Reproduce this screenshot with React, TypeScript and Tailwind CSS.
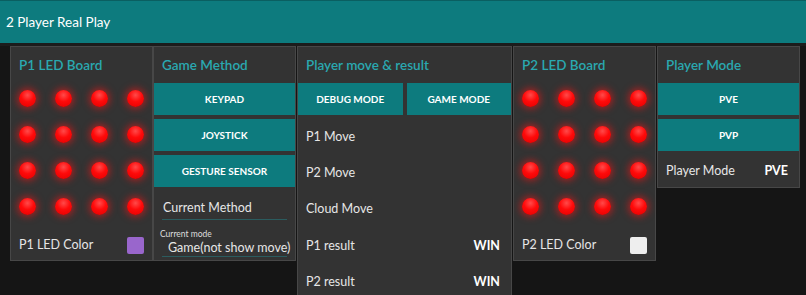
import React from 'react';

const teal = 'bg-[#0d7b7e]';

function Led() {
    return (
        <div className="flex items-center justify-center h-[36px] w-[36px]">
            <div className="w-[17px] h-[17px] rounded-full bg-[radial-gradient(circle_at_50%_30%,#ff4a4a_0%,#ff0a0a_45%,#e00000_100%)] shadow-[0_0_7px_2px_rgba(255,20,20,0.55)]"></div>
        </div>
    );
}

function LedBoard({ title, colorLabel, swatch }: { title: string; colorLabel: string; swatch: string }) {
    return (
        <div className="w-[143px] h-[215px] shrink-0 bg-[#333333] border border-[#474747] flex flex-col">
            <div className="h-[36px] shrink-0 flex items-center pl-[8px] text-[13.5px] font-semibold text-[#2aa8b0]">{title}</div>
            <div className="grid grid-cols-[repeat(4,36px)] -mt-[3px] ml-[-2px] shrink-0">
                {Array.from({ length: 16 }).map((_, i) => (
                    <Led key={i} />
                ))}
            </div>
            <div className="flex items-center justify-between h-[34px] mt-[4px] pl-[8px] pr-[8px] shrink-0">
                <span className="text-[12.5px] text-[#e6e6e6]">{colorLabel}</span>
                <span className={`w-[17px] h-[17px] rounded-[2px] ${swatch}`}></span>
            </div>
        </div>
    );
}

function Btn({ label, className = '' }: { label: string; className?: string }) {
    return (
        <div className={`${teal} h-[32px] shrink-0 flex items-center justify-center text-[10px] font-bold text-white ${className}`}>
            {label}
        </div>
    );
}

export default function App() {
    return (
        <div className="w-[806px] h-[295px] overflow-hidden bg-[#151515] font-['Lato','Liberation_Sans',sans-serif]">
            {/* Title bar */}
            <div className={`h-[43px] ${teal} border-t border-[#0a5f61] flex items-center pl-[6px] text-[13.5px] text-white`}>
                2 Player Real Play
            </div>
            <div className="h-[3px] bg-[#1c1c1c]"></div>

            <div className="flex items-start gap-[1px] pl-[10px]">
                <div className="w-[142px] shrink-0">
                    <LedBoard title="P1 LED Board" colorLabel="P1 LED Color" swatch="bg-[#9966cc]" />
                </div>

                {/* Game Method */}
                <div className="w-[143px] h-[215px] shrink-0 bg-[#333333] border border-[#474747] flex flex-col">
                    <div className="h-[36px] shrink-0 flex items-center pl-[8px] text-[13.5px] font-semibold text-[#2aa8b0]">Game Method</div>
                    <div className="flex flex-col gap-[4px] shrink-0">
                        <Btn label="KEYPAD" />
                        <Btn label="JOYSTICK" />
                        <Btn label="GESTURE SENSOR" />
                    </div>
                    <div className="mx-[8px] mt-[11px] h-[22px] shrink-0 flex items-center pl-[1px] border-b border-[#2b5c5f] text-[12.5px] text-[#e6e6e6]">
                        Current Method
                    </div>
                    <div className="mx-[8px] mt-[9px] shrink-0 border-b border-[#2b5c5f] whitespace-nowrap">
                        <div className="text-[8.5px] leading-[10px] text-[#dddddd] -ml-[2px]">Current mode</div>
                        <div className="text-[12.5px] leading-[17px] text-[#e6e6e6] pl-[6px]">Game(not show move)</div>
                    </div>
                </div>

                {/* Player move & result */}
                <div className="w-[215px] h-[260px] shrink-0 bg-[#333333] border border-[#474747] flex flex-col">
                    <div className="h-[36px] shrink-0 flex items-center pl-[8px] text-[13.5px] font-semibold text-[#2aa8b0]">Player move &amp; result</div>
                    <div className="flex gap-[4px] shrink-0">
                        <Btn label="DEBUG MODE" className="flex-1" />
                        <Btn label="GAME MODE" className="flex-1" />
                    </div>
                    <div className="mt-[4px] flex flex-col shrink-0">
                        {[
                            ['P1 Move', ''],
                            ['P2 Move', ''],
                            ['Cloud Move', ''],
                            ['P1 result', 'WIN'],
                            ['P2 result', 'WIN'],
                        ].map(([label, value]) => (
                            <div key={label} className="h-[36.3px] flex items-center justify-between pl-[8px] pr-[11px]">
                                <span className="text-[12.5px] text-[#e6e6e6]">{label}</span>
                                <span className="text-[12.5px] font-bold text-white">{value}</span>
                            </div>
                        ))}
                    </div>
                </div>

                <LedBoard title="P2 LED Board" colorLabel="P2 LED Color" swatch="bg-[#eeeeee]" />

                {/* Player Mode */}
                <div className="w-[143px] shrink-0 bg-[#333333] border border-[#474747] flex flex-col">
                    <div className="h-[36px] flex items-center pl-[8px] text-[13.5px] font-semibold text-[#2aa8b0]">Player Mode</div>
                    <div className="flex flex-col gap-[4px]">
                        <Btn label="PVE" />
                        <Btn label="PVP" />
                    </div>
                    <div className="h-[36px] flex items-center justify-between pl-[8px] pr-[11px] pt-[4px]">
                        <span className="text-[12.5px] text-[#e6e6e6]">Player Mode</span>
                        <span className="text-[12.5px] font-bold text-white">PVE</span>
                    </div>
                </div>
            </div>
        </div>
    );
}
